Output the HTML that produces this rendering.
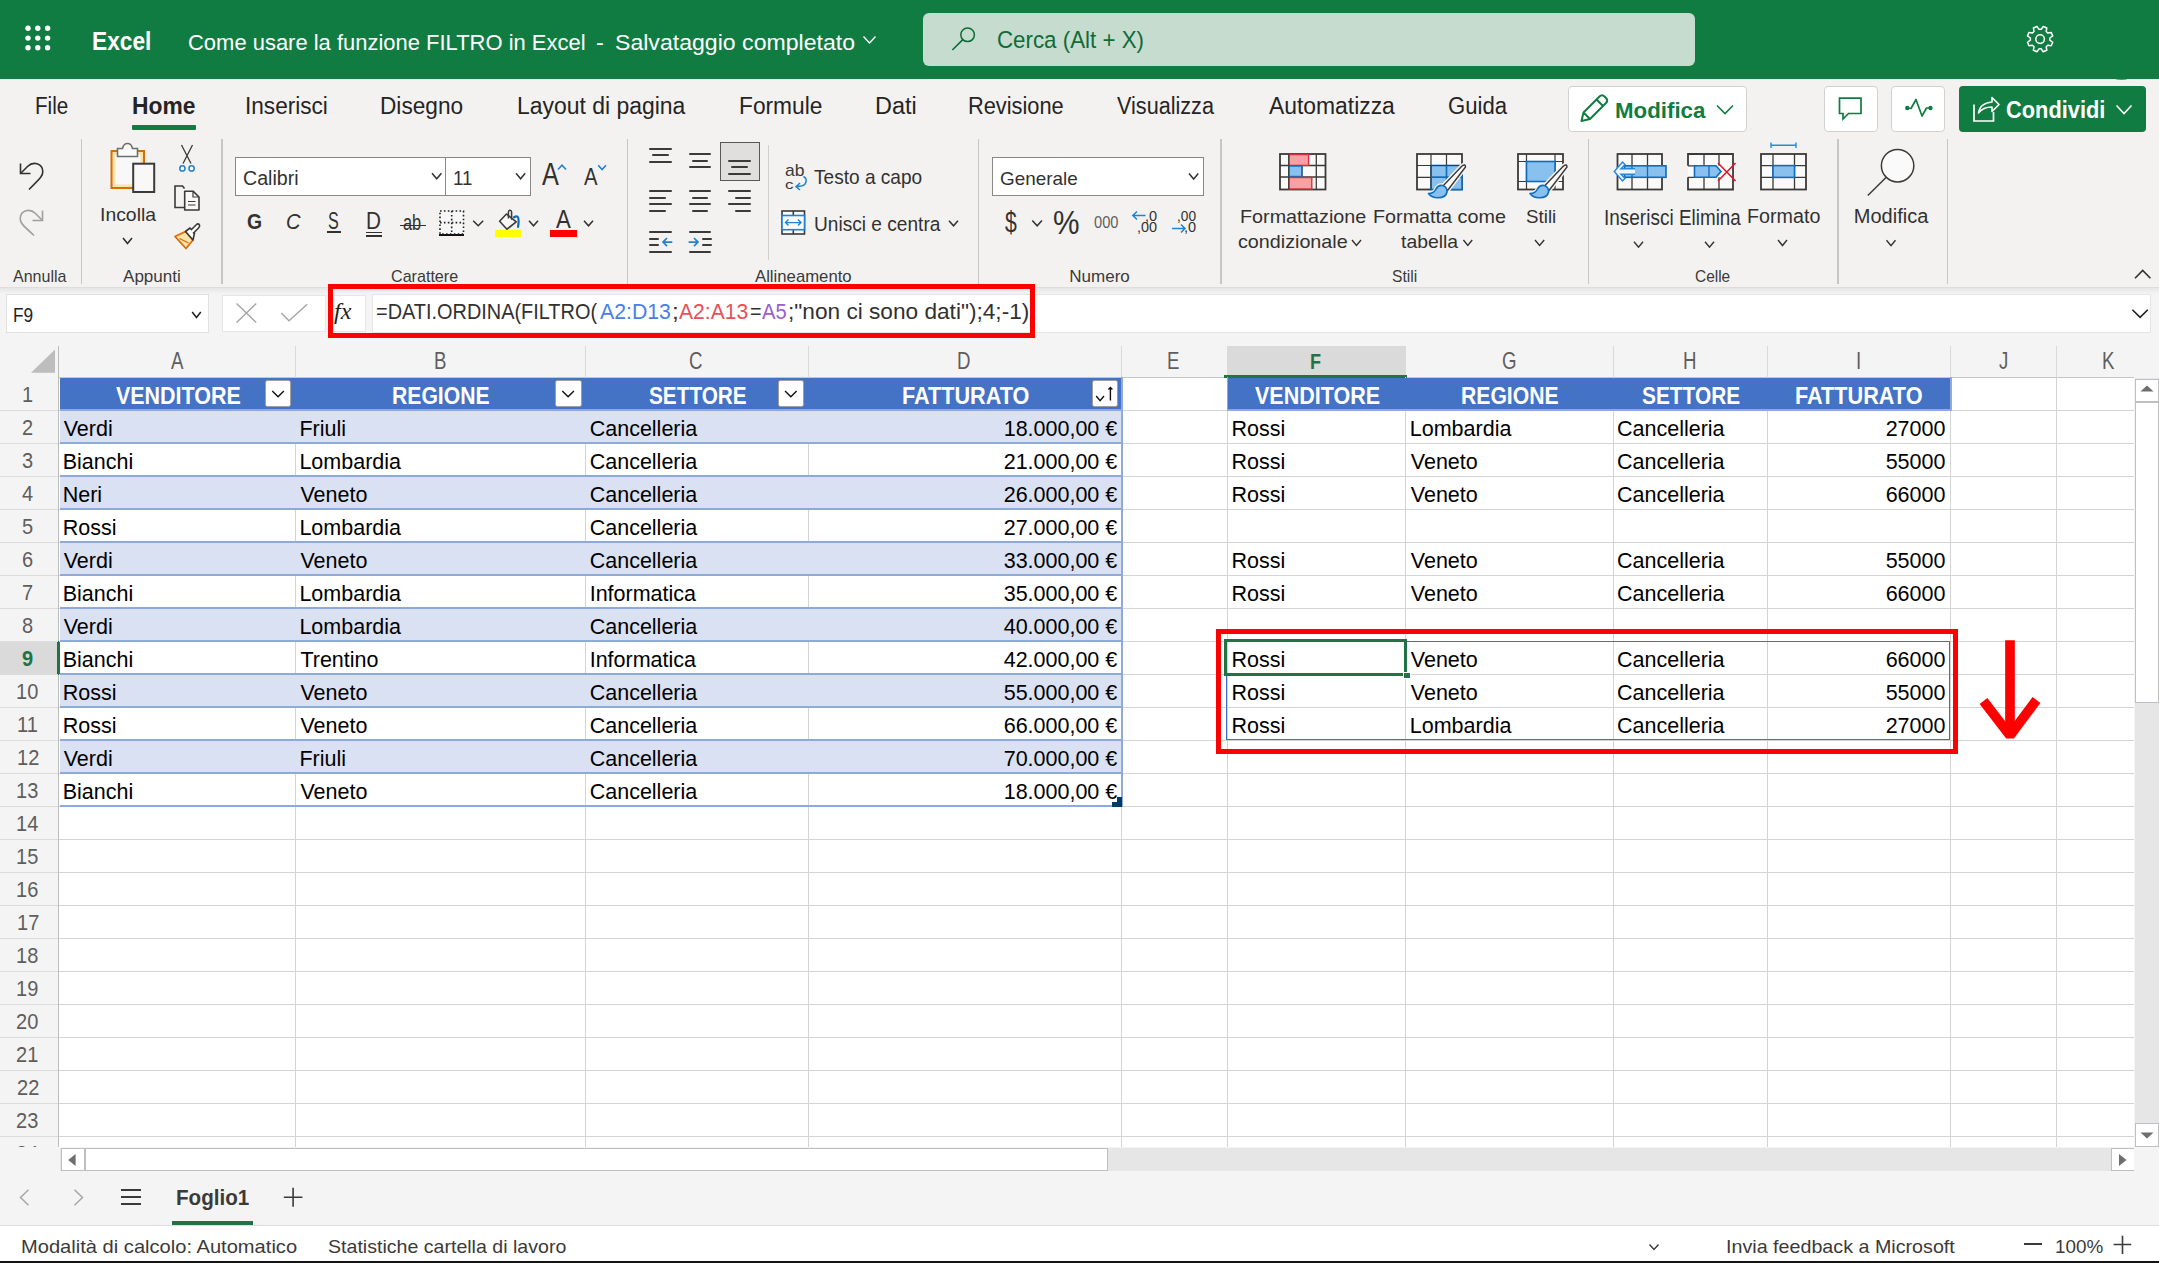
<!DOCTYPE html>
<html><head><meta charset="utf-8"><title>Excel</title>
<style>
html,body{margin:0;padding:0;width:2159px;height:1263px;overflow:hidden;background:#fff;font-family:'Liberation Sans',sans-serif;}
.r{position:absolute;}
.t{position:absolute;line-height:1;white-space:nowrap;transform-origin:0 0;}
svg{position:absolute;left:0;top:0;}
</style></head><body>
<div class="r" style="left:0px;top:0px;width:2159px;height:79px;background:#107C41;"></div>
<div class="r" style="left:923px;top:13px;width:772px;height:53px;background:#C5DCCE;border-radius:6px;"></div>
<div class="r" style="left:0px;top:79px;width:2159px;height:208px;background:#F3F2F1;"></div>
<div class="r" style="left:132px;top:125px;width:64px;height:5px;background:#107C41;border-radius:1px;"></div>
<div class="r" style="left:1567.5px;top:86px;width:179px;height:45.5px;background:#fff;border:1px solid #D1D1D1;border-radius:4px;box-sizing:border-box;"></div>
<div class="r" style="left:1823.5px;top:86px;width:54px;height:45.5px;background:#fff;border:1px solid #D1D1D1;border-radius:4px;box-sizing:border-box;"></div>
<div class="r" style="left:1891.3px;top:86px;width:54.2px;height:45.5px;background:#fff;border:1px solid #D1D1D1;border-radius:4px;box-sizing:border-box;"></div>
<div class="r" style="left:1959px;top:86px;width:187px;height:45.5px;background:#107C41;border-radius:4px;"></div>
<div class="r" style="left:80.5px;top:139px;width:1.5px;height:145px;background:#C8C6C4;"></div>
<div class="r" style="left:221.1px;top:139px;width:1.5px;height:145px;background:#C8C6C4;"></div>
<div class="r" style="left:626.6px;top:139px;width:1.5px;height:145px;background:#C8C6C4;"></div>
<div class="r" style="left:977.5px;top:139px;width:1.5px;height:145px;background:#C8C6C4;"></div>
<div class="r" style="left:1220.4px;top:139px;width:1.5px;height:145px;background:#C8C6C4;"></div>
<div class="r" style="left:1587.5px;top:139px;width:1.5px;height:145px;background:#C8C6C4;"></div>
<div class="r" style="left:1837.1px;top:139px;width:1.5px;height:145px;background:#C8C6C4;"></div>
<div class="r" style="left:1946.5px;top:139px;width:1.5px;height:145px;background:#C8C6C4;"></div>
<div class="r" style="left:767.5px;top:145px;width:1px;height:115px;background:#D2D0CE;"></div>
<div class="r" style="left:0px;top:287px;width:2159px;height:1px;background:#E4E3E2;"></div>
<div class="r" style="left:0px;top:288px;width:2159px;height:4px;background:linear-gradient(#E9E9E9,#F5F5F5);"></div>
<div class="r" style="left:235.2px;top:157.3px;width:210.5px;height:38.3px;background:#fff;border:1px solid #8A8886;box-sizing:border-box;"></div>
<div class="r" style="left:445px;top:157.3px;width:86px;height:38.3px;background:#fff;border:1px solid #8A8886;box-sizing:border-box;"></div>
<div class="r" style="left:327.4px;top:231px;width:13.2px;height:1.7px;background:#323130;"></div>
<div class="r" style="left:365.5px;top:231.8px;width:16px;height:1.6px;background:#323130;"></div>
<div class="r" style="left:365.5px;top:235.2px;width:16px;height:1.6px;background:#323130;"></div>
<div class="r" style="left:400px;top:224.8px;width:25.7px;height:1.5px;background:#323130;"></div>
<div class="r" style="left:439px;top:233.8px;width:25.2px;height:1.8px;background:#111;"></div>
<div class="r" style="left:495px;top:230.3px;width:26px;height:6.7px;background:#FFFF00;"></div>
<div class="r" style="left:549.9px;top:230.3px;width:27.1px;height:6.7px;background:#FF0000;"></div>
<div class="r" style="left:720.2px;top:142.1px;width:39.7px;height:38.6px;background:#E1DFDD;border:1.3px solid #5A5856;box-sizing:border-box;"></div>
<div class="r" style="left:648.5px;top:148px;width:23.799999999999955px;height:2px;background:#3B3A39;border-radius:1px;"></div>
<div class="r" style="left:652px;top:154px;width:17px;height:2px;background:#3B3A39;border-radius:1px;"></div>
<div class="r" style="left:648.5px;top:161px;width:23.799999999999955px;height:2px;background:#3B3A39;border-radius:1px;"></div>
<div class="r" style="left:688.6px;top:153px;width:22.899999999999977px;height:2px;background:#3B3A39;border-radius:1px;"></div>
<div class="r" style="left:692px;top:160px;width:16px;height:2px;background:#3B3A39;border-radius:1px;"></div>
<div class="r" style="left:688.6px;top:166px;width:22.899999999999977px;height:2px;background:#3B3A39;border-radius:1px;"></div>
<div class="r" style="left:727.6px;top:160px;width:23.799999999999955px;height:2px;background:#3B3A39;border-radius:1px;"></div>
<div class="r" style="left:731px;top:166px;width:17px;height:2px;background:#3B3A39;border-radius:1px;"></div>
<div class="r" style="left:727.6px;top:173px;width:23.799999999999955px;height:2px;background:#3B3A39;border-radius:1px;"></div>
<div class="r" style="left:648.5px;top:190px;width:23.799999999999955px;height:2px;background:#3B3A39;border-radius:1px;"></div>
<div class="r" style="left:688.6px;top:190px;width:22.899999999999977px;height:2px;background:#3B3A39;border-radius:1px;"></div>
<div class="r" style="left:727.6px;top:190px;width:23.799999999999955px;height:2px;background:#3B3A39;border-radius:1px;"></div>
<div class="r" style="left:648.5px;top:197px;width:17.100000000000023px;height:2px;background:#3B3A39;border-radius:1px;"></div>
<div class="r" style="left:692px;top:197px;width:16px;height:2px;background:#3B3A39;border-radius:1px;"></div>
<div class="r" style="left:734.5px;top:197px;width:16.899999999999977px;height:2px;background:#3B3A39;border-radius:1px;"></div>
<div class="r" style="left:648.5px;top:203px;width:23.799999999999955px;height:2px;background:#3B3A39;border-radius:1px;"></div>
<div class="r" style="left:688.6px;top:203px;width:22.899999999999977px;height:2px;background:#3B3A39;border-radius:1px;"></div>
<div class="r" style="left:727.6px;top:203px;width:23.799999999999955px;height:2px;background:#3B3A39;border-radius:1px;"></div>
<div class="r" style="left:648.5px;top:210px;width:17.100000000000023px;height:2px;background:#3B3A39;border-radius:1px;"></div>
<div class="r" style="left:692px;top:210px;width:16px;height:2px;background:#3B3A39;border-radius:1px;"></div>
<div class="r" style="left:734.5px;top:210px;width:16.899999999999977px;height:2px;background:#3B3A39;border-radius:1px;"></div>
<div class="r" style="left:648.5px;top:231px;width:23.799999999999955px;height:2px;background:#3B3A39;border-radius:1px;"></div>
<div class="r" style="left:648.5px;top:238px;width:10.200000000000045px;height:2px;background:#3B3A39;border-radius:1px;"></div>
<div class="r" style="left:648.5px;top:244px;width:10.200000000000045px;height:2px;background:#3B3A39;border-radius:1px;"></div>
<div class="r" style="left:648.5px;top:251px;width:23.799999999999955px;height:2px;background:#3B3A39;border-radius:1px;"></div>
<div class="r" style="left:688.6px;top:231px;width:22.899999999999977px;height:2px;background:#3B3A39;border-radius:1px;"></div>
<div class="r" style="left:702px;top:238px;width:9.5px;height:2px;background:#3B3A39;border-radius:1px;"></div>
<div class="r" style="left:702px;top:244px;width:9.5px;height:2px;background:#3B3A39;border-radius:1px;"></div>
<div class="r" style="left:688.6px;top:251px;width:22.899999999999977px;height:2px;background:#3B3A39;border-radius:1px;"></div>
<div class="r" style="left:992.2px;top:157.2px;width:211.5px;height:38.4px;background:#fff;border:1px solid #8A8886;box-sizing:border-box;"></div>
<div class="r" style="left:0px;top:292px;width:2159px;height:971px;background:#F4F4F4;"></div>
<div class="r" style="left:0px;top:287px;width:2159px;height:1px;background:#DEDDDC;"></div>
<div class="r" style="left:0px;top:288px;width:2159px;height:6px;background:linear-gradient(#E6E6E6,#F4F4F4);"></div>
<div class="r" style="left:6.4px;top:294px;width:203.1px;height:38.6px;background:#fff;border:1px solid #E1E1E1;box-sizing:border-box;"></div>
<div class="r" style="left:222.4px;top:295px;width:104px;height:36.7px;background:#fff;border:1px solid #E6E6E6;box-sizing:border-box;"></div>
<div class="r" style="left:333px;top:295px;width:33.3px;height:37px;background:#fff;border:1px solid #E6E6E6;box-sizing:border-box;"></div>
<div class="r" style="left:372.4px;top:294px;width:1779px;height:38.6px;background:#fff;border:1px solid #E6E6E6;box-sizing:border-box;"></div>
<div class="r" style="left:59px;top:377px;width:2075px;height:770px;background:#fff;"></div>
<div class="r" style="left:295px;top:346px;width:1px;height:31px;background:#DADADA;"></div>
<div class="r" style="left:585px;top:346px;width:1px;height:31px;background:#DADADA;"></div>
<div class="r" style="left:808px;top:346px;width:1px;height:31px;background:#DADADA;"></div>
<div class="r" style="left:1121px;top:346px;width:1px;height:31px;background:#DADADA;"></div>
<div class="r" style="left:1227px;top:346px;width:1px;height:31px;background:#DADADA;"></div>
<div class="r" style="left:1405px;top:346px;width:1px;height:31px;background:#DADADA;"></div>
<div class="r" style="left:1613px;top:346px;width:1px;height:31px;background:#DADADA;"></div>
<div class="r" style="left:1767px;top:346px;width:1px;height:31px;background:#DADADA;"></div>
<div class="r" style="left:1950px;top:346px;width:1px;height:31px;background:#DADADA;"></div>
<div class="r" style="left:2055.5px;top:346px;width:1px;height:31px;background:#DADADA;"></div>
<div class="r" style="left:0px;top:376.5px;width:2134px;height:1px;background:#C6C6C6;"></div>
<div class="r" style="left:1227px;top:346px;width:178px;height:31px;background:#DADADA;"></div>
<div class="r" style="left:1224px;top:374.5px;width:182.5px;height:3px;background:#217346;"></div>
<div class="r" style="left:0px;top:377px;width:58px;height:770px;background:#F4F4F4;"></div>
<div class="r" style="left:58px;top:346px;width:1.3px;height:801px;background:#BDBDBD;"></div>
<div class="r" style="left:0px;top:641px;width:57px;height:33px;background:#DADADA;"></div>
<div class="r" style="left:57px;top:641px;width:3px;height:34px;background:#217346;"></div>
<div class="r" style="left:0px;top:410px;width:58px;height:1px;background:#DCDCDC;"></div>
<div class="r" style="left:59px;top:410px;width:2075px;height:1px;background:#D4D4D4;"></div>
<div class="r" style="left:0px;top:443px;width:58px;height:1px;background:#DCDCDC;"></div>
<div class="r" style="left:59px;top:443px;width:2075px;height:1px;background:#D4D4D4;"></div>
<div class="r" style="left:0px;top:476px;width:58px;height:1px;background:#DCDCDC;"></div>
<div class="r" style="left:59px;top:476px;width:2075px;height:1px;background:#D4D4D4;"></div>
<div class="r" style="left:0px;top:509px;width:58px;height:1px;background:#DCDCDC;"></div>
<div class="r" style="left:59px;top:509px;width:2075px;height:1px;background:#D4D4D4;"></div>
<div class="r" style="left:0px;top:542px;width:58px;height:1px;background:#DCDCDC;"></div>
<div class="r" style="left:59px;top:542px;width:2075px;height:1px;background:#D4D4D4;"></div>
<div class="r" style="left:0px;top:575px;width:58px;height:1px;background:#DCDCDC;"></div>
<div class="r" style="left:59px;top:575px;width:2075px;height:1px;background:#D4D4D4;"></div>
<div class="r" style="left:0px;top:608px;width:58px;height:1px;background:#DCDCDC;"></div>
<div class="r" style="left:59px;top:608px;width:2075px;height:1px;background:#D4D4D4;"></div>
<div class="r" style="left:0px;top:641px;width:58px;height:1px;background:#DCDCDC;"></div>
<div class="r" style="left:59px;top:641px;width:2075px;height:1px;background:#D4D4D4;"></div>
<div class="r" style="left:0px;top:674px;width:58px;height:1px;background:#DCDCDC;"></div>
<div class="r" style="left:59px;top:674px;width:2075px;height:1px;background:#D4D4D4;"></div>
<div class="r" style="left:0px;top:707px;width:58px;height:1px;background:#DCDCDC;"></div>
<div class="r" style="left:59px;top:707px;width:2075px;height:1px;background:#D4D4D4;"></div>
<div class="r" style="left:0px;top:740px;width:58px;height:1px;background:#DCDCDC;"></div>
<div class="r" style="left:59px;top:740px;width:2075px;height:1px;background:#D4D4D4;"></div>
<div class="r" style="left:0px;top:773px;width:58px;height:1px;background:#DCDCDC;"></div>
<div class="r" style="left:59px;top:773px;width:2075px;height:1px;background:#D4D4D4;"></div>
<div class="r" style="left:0px;top:806px;width:58px;height:1px;background:#DCDCDC;"></div>
<div class="r" style="left:59px;top:806px;width:2075px;height:1px;background:#D4D4D4;"></div>
<div class="r" style="left:0px;top:839px;width:58px;height:1px;background:#DCDCDC;"></div>
<div class="r" style="left:59px;top:839px;width:2075px;height:1px;background:#D4D4D4;"></div>
<div class="r" style="left:0px;top:872px;width:58px;height:1px;background:#DCDCDC;"></div>
<div class="r" style="left:59px;top:872px;width:2075px;height:1px;background:#D4D4D4;"></div>
<div class="r" style="left:0px;top:905px;width:58px;height:1px;background:#DCDCDC;"></div>
<div class="r" style="left:59px;top:905px;width:2075px;height:1px;background:#D4D4D4;"></div>
<div class="r" style="left:0px;top:938px;width:58px;height:1px;background:#DCDCDC;"></div>
<div class="r" style="left:59px;top:938px;width:2075px;height:1px;background:#D4D4D4;"></div>
<div class="r" style="left:0px;top:971px;width:58px;height:1px;background:#DCDCDC;"></div>
<div class="r" style="left:59px;top:971px;width:2075px;height:1px;background:#D4D4D4;"></div>
<div class="r" style="left:0px;top:1004px;width:58px;height:1px;background:#DCDCDC;"></div>
<div class="r" style="left:59px;top:1004px;width:2075px;height:1px;background:#D4D4D4;"></div>
<div class="r" style="left:0px;top:1037px;width:58px;height:1px;background:#DCDCDC;"></div>
<div class="r" style="left:59px;top:1037px;width:2075px;height:1px;background:#D4D4D4;"></div>
<div class="r" style="left:0px;top:1070px;width:58px;height:1px;background:#DCDCDC;"></div>
<div class="r" style="left:59px;top:1070px;width:2075px;height:1px;background:#D4D4D4;"></div>
<div class="r" style="left:0px;top:1103px;width:58px;height:1px;background:#DCDCDC;"></div>
<div class="r" style="left:59px;top:1103px;width:2075px;height:1px;background:#D4D4D4;"></div>
<div class="r" style="left:0px;top:1136px;width:58px;height:1px;background:#DCDCDC;"></div>
<div class="r" style="left:59px;top:1136px;width:2075px;height:1px;background:#D4D4D4;"></div>
<div class="r" style="left:295px;top:377px;width:1px;height:770px;background:#D4D4D4;"></div>
<div class="r" style="left:585px;top:377px;width:1px;height:770px;background:#D4D4D4;"></div>
<div class="r" style="left:808px;top:377px;width:1px;height:770px;background:#D4D4D4;"></div>
<div class="r" style="left:1121px;top:377px;width:1px;height:770px;background:#D4D4D4;"></div>
<div class="r" style="left:1227px;top:377px;width:1px;height:770px;background:#D4D4D4;"></div>
<div class="r" style="left:1405px;top:377px;width:1px;height:770px;background:#D4D4D4;"></div>
<div class="r" style="left:1613px;top:377px;width:1px;height:770px;background:#D4D4D4;"></div>
<div class="r" style="left:1767px;top:377px;width:1px;height:770px;background:#D4D4D4;"></div>
<div class="r" style="left:1950px;top:377px;width:1px;height:770px;background:#D4D4D4;"></div>
<div class="r" style="left:2055.5px;top:377px;width:1px;height:770px;background:#D4D4D4;"></div>
<div class="r" style="left:60px;top:378px;width:1061px;height:31px;background:#4472C4;"></div>
<div class="r" style="left:60px;top:410px;width:1061px;height:33px;background:#D9E1F2;"></div>
<div class="r" style="left:60px;top:476px;width:1061px;height:33px;background:#D9E1F2;"></div>
<div class="r" style="left:60px;top:542px;width:1061px;height:33px;background:#D9E1F2;"></div>
<div class="r" style="left:60px;top:608px;width:1061px;height:33px;background:#D9E1F2;"></div>
<div class="r" style="left:60px;top:674px;width:1061px;height:33px;background:#D9E1F2;"></div>
<div class="r" style="left:60px;top:740px;width:1061px;height:33px;background:#D9E1F2;"></div>
<div class="r" style="left:60px;top:409px;width:1063px;height:2px;background:#8EA9DB;"></div>
<div class="r" style="left:60px;top:442px;width:1063px;height:2px;background:#8EA9DB;"></div>
<div class="r" style="left:60px;top:475px;width:1063px;height:2px;background:#8EA9DB;"></div>
<div class="r" style="left:60px;top:508px;width:1063px;height:2px;background:#8EA9DB;"></div>
<div class="r" style="left:60px;top:541px;width:1063px;height:2px;background:#8EA9DB;"></div>
<div class="r" style="left:60px;top:574px;width:1063px;height:2px;background:#8EA9DB;"></div>
<div class="r" style="left:60px;top:607px;width:1063px;height:2px;background:#8EA9DB;"></div>
<div class="r" style="left:60px;top:640px;width:1063px;height:2px;background:#8EA9DB;"></div>
<div class="r" style="left:60px;top:673px;width:1063px;height:2px;background:#8EA9DB;"></div>
<div class="r" style="left:60px;top:706px;width:1063px;height:2px;background:#8EA9DB;"></div>
<div class="r" style="left:60px;top:739px;width:1063px;height:2px;background:#8EA9DB;"></div>
<div class="r" style="left:60px;top:772px;width:1063px;height:2px;background:#8EA9DB;"></div>
<div class="r" style="left:60px;top:805px;width:1063px;height:2px;background:#8EA9DB;"></div>
<div class="r" style="left:1121px;top:377px;width:2px;height:430px;background:#8EA9DB;"></div>
<div class="r" style="left:1117px;top:797px;width:5px;height:10px;background:#003A66;"></div>
<div class="r" style="left:1112px;top:802px;width:10px;height:5px;background:#003A66;"></div>
<div class="r" style="left:265px;top:380.3px;width:26.100000000000023px;height:27.2px;background:#fff;border:1px solid #A19F9D;border-radius:2.5px;box-sizing:border-box;"></div>
<div class="r" style="left:554.6px;top:380.3px;width:27.0px;height:27.2px;background:#fff;border:1px solid #A19F9D;border-radius:2.5px;box-sizing:border-box;"></div>
<div class="r" style="left:777.5px;top:380.3px;width:26.700000000000045px;height:27.2px;background:#fff;border:1px solid #A19F9D;border-radius:2.5px;box-sizing:border-box;"></div>
<div class="r" style="left:1091.7px;top:380.3px;width:26.700000000000045px;height:27.2px;background:#fff;border:1px solid #A19F9D;border-radius:2.5px;box-sizing:border-box;"></div>
<div class="r" style="left:1227px;top:378px;width:723px;height:31px;background:#4472C4;"></div>
<div class="r" style="left:1227px;top:409px;width:724.5px;height:2px;background:#8EA9DB;"></div>
<div class="r" style="left:1949.5px;top:377px;width:2px;height:34px;background:#8EA9DB;"></div>
<div class="r" style="left:1226.5px;top:377px;width:1px;height:33px;background:#8EA9DB;"></div>
<svg width="2159" height="1263" viewBox="0 0 2159 1263">
<circle cx="28" cy="28.3" r="2.7" fill="#fff"/>
<circle cx="37.8" cy="28.3" r="2.7" fill="#fff"/>
<circle cx="47.6" cy="28.3" r="2.7" fill="#fff"/>
<circle cx="28" cy="38.1" r="2.7" fill="#fff"/>
<circle cx="37.8" cy="38.1" r="2.7" fill="#fff"/>
<circle cx="47.6" cy="38.1" r="2.7" fill="#fff"/>
<circle cx="28" cy="47.8" r="2.7" fill="#fff"/>
<circle cx="37.8" cy="47.8" r="2.7" fill="#fff"/>
<circle cx="47.6" cy="47.8" r="2.7" fill="#fff"/>
<polyline points="863.5,36.5 869.5,43 875.5,36.5" fill="none" stroke="#fff" stroke-width="1.4"/>
<circle cx="967.6" cy="34.8" r="6.8" fill="none" stroke="#0F6B38" stroke-width="1.5"/>
<line x1="952.8" y1="49.5" x2="962.8" y2="39.6" stroke="#0F6B38" stroke-width="1.6" stroke-linecap="round"/>
<polygon points="2041.21,29.36 2043.24,26.49 2046.80,27.96 2046.20,31.43 2047.77,33.00 2051.24,32.40 2052.71,35.96 2049.84,37.99 2049.84,40.21 2052.71,42.24 2051.24,45.80 2047.77,45.20 2046.20,46.77 2046.80,50.24 2043.24,51.71 2041.21,48.84 2038.99,48.84 2036.96,51.71 2033.40,50.24 2034.00,46.77 2032.43,45.20 2028.96,45.80 2027.49,42.24 2030.36,40.21 2030.36,37.99 2027.49,35.96 2028.96,32.40 2032.43,33.00 2034.00,31.43 2033.40,27.96 2036.96,26.49 2038.99,29.36" fill="none" stroke="#fff" stroke-width="1.5" stroke-linejoin="round"/>
<circle cx="2040.1" cy="39.1" r="4.3" fill="none" stroke="#fff" stroke-width="1.5"/>
<path d="M2113 78.6 Q2121.5 81 2130 78.6 Z" fill="#107C41"/>
<path d="M1581.5 121 L1583.5 112.5 L1599.5 96.5 Q1602 94 1604.5 96.5 L1606 98 Q1608.5 100.5 1606 103 L1590 119 Z M1596.5 99.5 L1603 106 M1583.5 112.5 L1590 119" fill="none" stroke="#107C41" stroke-width="2" stroke-linejoin="round"/>
<polyline points="1717,105.5 1725,113.5 1733,105.5" fill="none" stroke="#107C41" stroke-width="1.6"/>
<path d="M1839.5 98.2 H1861 V113.5 H1848.5 L1843 119 V113.5 H1839.5 Z" fill="none" stroke="#107C41" stroke-width="1.7" stroke-linejoin="miter"/>
<polyline points="1907,108 1911,108.5 1916,99.5 1922,116 1926.5,108 1930.5,108" fill="none" stroke="#107C41" stroke-width="1.7" stroke-linejoin="round"/>
<circle cx="1907.3" cy="108" r="2.2" fill="#107C41"/><circle cx="1930.5" cy="108" r="2.2" fill="#107C41"/>
<path d="M1974 104.5 V121 H1993.5 V112" fill="none" stroke="#fff" stroke-width="1.7"/>
<path d="M1978.5 113 Q1980 103 1992 102 V97.5 L1999 104.5 L1992 111.5 V107 Q1983 107 1978.5 113 Z" fill="none" stroke="#fff" stroke-width="1.6" stroke-linejoin="round"/>
<polyline points="2116.5,105.5 2124,113.5 2131.5,105.5" fill="none" stroke="#fff" stroke-width="1.6"/>
<path d="M20.5 163.5 V173.5 H30.5" fill="none" stroke="#323130" stroke-width="1.6"/>
<path d="M20.8 173.2 L27.5 166.5 C33 161 42.5 163 42.8 171.5 C43 175.5 41 177.5 29 189.5" fill="none" stroke="#323130" stroke-width="1.6"/>
<path d="M42.5 210.5 V220.5 H32.5" fill="none" stroke="#A19F9D" stroke-width="1.6"/>
<path d="M42.2 220.2 L35.5 213.5 C30 208 20.5 210 20.2 218.5 C20 222.5 22 224.5 34 235.5" fill="none" stroke="#A19F9D" stroke-width="1.6"/>
<rect x="111.5" y="151" width="32.5" height="37" fill="#FBE3A6" stroke="#D86B0C" stroke-width="2"/>
<rect x="115" y="154.5" width="25.5" height="30" fill="#F8F8F8"/>
<path d="M117.5 156.5 V148.5 H122.5 Q123.5 143.5 127.5 143.5 Q131.5 143.5 132.5 148.5 H137.5 V156.5 Z" fill="#FAFAFA" stroke="#6E6E6E" stroke-width="1.6"/>
<rect x="133.2" y="163.7" width="21" height="28.3" fill="#F8F8F8" stroke="#3B3A39" stroke-width="2"/>
<polyline points="123,238 127.5,243.5 132,238" fill="none" stroke="#323130" stroke-width="1.6"/>
<path d="M181.5 145 L191 163.5 M192.5 145 L183 163.5" stroke="#3B3A39" stroke-width="1.3" fill="none"/>
<circle cx="182.4" cy="168.4" r="2.6" fill="#fff" stroke="#1F83D2" stroke-width="1.5"/><circle cx="191.6" cy="168.4" r="2.6" fill="#fff" stroke="#1F83D2" stroke-width="1.5"/>
<path d="M185 207.5 H175 V186 H182.5 L184.5 188.5" fill="none" stroke="#3B3A39" stroke-width="1.6"/>
<path d="M184.7 191.2 H193 L199 197 V210 H184.7 Z" fill="#F8F8F8" stroke="#3B3A39" stroke-width="1.6" stroke-linejoin="round"/>
<path d="M193 191.2 V197 H199 M188 201.5 H195.5 M188 205 H195.5" fill="none" stroke="#3B3A39" stroke-width="1.2"/>
<path d="M175 236.5 L185.5 231.5 L193 240 L186 248.5 Z" fill="#FBE3A6" stroke="#D86B0C" stroke-width="1.8" stroke-linejoin="round"/>
<path d="M179.5 238.5 L188.5 243" stroke="#D86B0C" stroke-width="1.3"/>
<path d="M185.5 231.5 L190 228 L194.5 233 L193 240 Z" fill="#fff" stroke="#3B3A39" stroke-width="1.6" stroke-linejoin="round"/>
<path d="M191 230 L196.5 224.5 Q198.5 223 199.5 225 Q200 226.5 198.5 228 L193 233.5" fill="#fff" stroke="#3B3A39" stroke-width="1.6"/>
<polyline points="432,173.3 436.7,178.8 441.4,173.3" fill="none" stroke="#323130" stroke-width="1.5"/>
<polyline points="516,173.3 520.6,178.8 525.2,173.3" fill="none" stroke="#323130" stroke-width="1.5"/>
<polyline points="558,169.5 562.0,165.2 566,169.5" fill="none" stroke="#1F83D2" stroke-width="1.6"/>
<polyline points="598.2,165.2 602.1,169.5 606,165.2" fill="none" stroke="#1F83D2" stroke-width="1.6"/>
<rect x="440" y="211" width="23.5" height="23" fill="#F8F8F8" stroke="#222" stroke-width="1.6" stroke-dasharray="1.6 2.3"/>
<path d="M451.7 211 V234 M440 222.6 H463.5" stroke="#222" stroke-width="1.6" stroke-dasharray="1.6 2.3"/>
<polyline points="473.2,220.8 478.2,225.8 483.2,220.8" fill="none" stroke="#323130" stroke-width="1.5"/>
<path d="M499.6 221.2 L506.5 214 L516.2 221.8 L507 229.2 Z" fill="#F8F8F8" stroke="#3B3A39" stroke-width="1.6" stroke-linejoin="round"/>
<path d="M508.4 218.5 V212 Q508.4 210.2 510 210.2 Q511.6 210.2 511.6 212 V219.8" fill="none" stroke="#3B3A39" stroke-width="1.5"/>
<path d="M514 217.3 Q518.6 214.5 518.6 220.5 Q518.6 224 518 226.8" fill="none" stroke="#0F6CBD" stroke-width="2.2" stroke-linecap="round"/>
<polyline points="529,220.8 533.5,225.8 538,220.8" fill="none" stroke="#323130" stroke-width="1.5"/>
<polyline points="584,220.8 588.5,225.8 593,220.8" fill="none" stroke="#323130" stroke-width="1.5"/>
<path d="M663 242.1 H672.3 M667 238 L663 242.1 L667 246.2" fill="none" stroke="#1F83D2" stroke-width="1.7"/>
<path d="M688.6 242.1 H698 M694 238 L698 242.1 L694 246.2" fill="none" stroke="#1F83D2" stroke-width="1.7"/>
<path d="M803.5 176.5 Q808 179 805 184 Q803 186.5 796.5 186.5 M800 183 L796 186.7 L800 190" fill="none" stroke="#1F83D2" stroke-width="1.5"/>
<rect x="782" y="211" width="22.5" height="23" fill="#FAFAFA" stroke="#3B3A39" stroke-width="1.6"/>
<path d="M793.3 211 V215.5 M793.3 229.7 V234" stroke="#3B3A39" stroke-width="1.6"/>
<rect x="782" y="215.5" width="22.5" height="14.2" fill="#FAFAFA" stroke="#1F83D2" stroke-width="1.6"/>
<path d="M785.5 222.6 H801 M788.5 219.6 L785.5 222.6 L788.5 225.6 M798 219.6 L801 222.6 L798 225.6" fill="none" stroke="#1F83D2" stroke-width="1.4"/>
<polyline points="949,220.8 953.5,225.8 958,220.8" fill="none" stroke="#323130" stroke-width="1.5"/>
<polyline points="1189,173.6 1193.65,179 1198.3,173.6" fill="none" stroke="#323130" stroke-width="1.5"/>
<polyline points="1032.3,220.5 1037.15,225.8 1042,220.5" fill="none" stroke="#323130" stroke-width="1.5"/>
<path d="M1132.5 215.5 H1145.5 M1137 211.5 L1132.8 215.5 L1137 219.5" fill="none" stroke="#1F83D2" stroke-width="1.5"/>
<path d="M1172 228.5 H1185 M1181 224.5 L1185 228.5 L1181 232.5" fill="none" stroke="#1F83D2" stroke-width="1.5"/>
<rect x="1280" y="154" width="45.5" height="35.5" fill="#FAFAFA" stroke="#3B3A39" stroke-width="1.8"/>
<path d="M1280 165.5 H1325.5 M1280 177 H1325.5 M1316.3 154 V189.5 M1302 165.5 V177" stroke="#3B3A39" stroke-width="1.3" fill="none"/>
<rect x="1288.8" y="154.6" width="19.8" height="10.8" fill="#F7A1A4" stroke="#D13438" stroke-width="1.4"/>
<rect x="1288.8" y="166" width="13" height="10.5" fill="#8AC0EE" stroke="#0F6CBD" stroke-width="1.4"/>
<rect x="1288.8" y="177.5" width="23" height="11.5" fill="#F7A1A4" stroke="#D13438" stroke-width="1.4"/>
<path d="M1288.8 154 V189.5" stroke="#3B3A39" stroke-width="1.3"/>
<rect x="1417" y="154" width="45" height="35.5" fill="#FAFAFA" stroke="#3B3A39" stroke-width="1.8"/>
<rect x="1431" y="165.5" width="31" height="24" fill="#8AC0EE" stroke="#0F6CBD" stroke-width="1.6"/>
<path d="M1417 165.5 H1431 M1417 177.3 H1462 M1431 154 V189.5 M1446.5 154 V189.5 M1431 165.5 H1462" stroke="#3B3A39" stroke-width="1.2" fill="none"/>
<path d="M1431 177.3 H1462 M1446.5 165.5 V189.5" stroke="#0F6CBD" stroke-width="1.4" fill="none"/>
<path d="M1442.50 186.50 L1462.00 166.00 Q1465.50 163.50 1465.50 167.00 L1447.50 190.50 Z" fill="#fff" stroke="#F3F2F1" stroke-width="4.5" stroke-linejoin="round"/>
<path d="M1428.50 193.50 Q1434.00 193.50 1436.00 189.00 Q1438.50 184.50 1442.50 185.50 Q1447.50 187.00 1447.00 192.00 Q1446.00 197.80 1438.00 197.80 Q1431.50 197.80 1428.50 193.50 Z" fill="#fff" stroke="#F3F2F1" stroke-width="4" stroke-linejoin="round"/>
<path d="M1442.50 186.50 L1462.00 166.00 Q1465.50 163.50 1465.50 167.00 L1447.50 190.50 Z" fill="#FAFAFA" stroke="#3B3A39" stroke-width="1.4" stroke-linejoin="round"/>
<path d="M1428.50 193.50 Q1434.00 193.50 1436.00 189.00 Q1438.50 184.50 1442.50 185.50 Q1447.50 187.00 1447.00 192.00 Q1446.00 197.80 1438.00 197.80 Q1431.50 197.80 1428.50 193.50 Z" fill="#8AC0EE" stroke="#0F6CBD" stroke-width="1.6" stroke-linejoin="round"/>
<rect x="1518" y="154" width="45" height="35.5" fill="#FAFAFA" stroke="#3B3A39" stroke-width="1.8"/>
<path d="M1518 161.5 H1563 M1518 181.5 H1563 M1526.5 154 V189.5 M1555 154 V189.5" stroke="#3B3A39" stroke-width="1.2" fill="none"/>
<rect x="1526.5" y="161.5" width="28.5" height="20" fill="#8AC0EE" stroke="#0F6CBD" stroke-width="1.6"/>
<path d="M1544.00 186.50 L1563.50 166.00 Q1567.00 163.50 1567.00 167.00 L1549.00 190.50 Z" fill="#fff" stroke="#F3F2F1" stroke-width="4.5" stroke-linejoin="round"/>
<path d="M1530.00 193.50 Q1535.50 193.50 1537.50 189.00 Q1540.00 184.50 1544.00 185.50 Q1549.00 187.00 1548.50 192.00 Q1547.50 197.80 1539.50 197.80 Q1533.00 197.80 1530.00 193.50 Z" fill="#fff" stroke="#F3F2F1" stroke-width="4" stroke-linejoin="round"/>
<path d="M1544.00 186.50 L1563.50 166.00 Q1567.00 163.50 1567.00 167.00 L1549.00 190.50 Z" fill="#FAFAFA" stroke="#3B3A39" stroke-width="1.4" stroke-linejoin="round"/>
<path d="M1530.00 193.50 Q1535.50 193.50 1537.50 189.00 Q1540.00 184.50 1544.00 185.50 Q1549.00 187.00 1548.50 192.00 Q1547.50 197.80 1539.50 197.80 Q1533.00 197.80 1530.00 193.50 Z" fill="#8AC0EE" stroke="#0F6CBD" stroke-width="1.6" stroke-linejoin="round"/>
<polyline points="1352,240 1356.5,245.5 1361,240" fill="none" stroke="#323130" stroke-width="1.4"/>
<polyline points="1463.4,240 1467.8000000000002,245.5 1472.2,240" fill="none" stroke="#323130" stroke-width="1.4"/>
<polyline points="1535,240 1539.6,245.5 1544.2,240" fill="none" stroke="#323130" stroke-width="1.4"/>
<rect x="1617.5" y="154" width="44.5" height="35.5" fill="#FAFAFA" stroke="#3B3A39" stroke-width="1.8"/>
<path d="M1632 154 V189.5 M1647.5 154 V189.5" stroke="#3B3A39" stroke-width="1.3"/>
<rect x="1624.5" y="165.8" width="41.5" height="11.5" fill="#8AC0EE" stroke="#0F6CBD" stroke-width="1.6"/>
<path d="M1632 165.8 V177.3 M1647.5 165.8 V177.3" stroke="#0F6CBD" stroke-width="1.3"/>
<path d="M1635 168.8 H1621 L1625 164.5 L1622.5 162 L1614.3 171.5 L1622.5 181 L1625 178.5 L1621 174.2 H1635" fill="#F0F6FC" stroke="#2B88D8" stroke-width="1.5" stroke-linejoin="miter"/>
<path d="M1688 165.8 V154 H1733 V189.5 H1688 V177.3" fill="#FAFAFA" stroke="#3B3A39" stroke-width="1.8"/>
<path d="M1704 154 V165.8 M1719 154 V165.8 M1704 177.3 V189.5 M1719 177.3 V189.5 M1688 165.8 H1695 M1688 177.3 H1695" stroke="#3B3A39" stroke-width="1.3"/>
<path d="M1694.5 165.8 H1716 L1721 171.5 L1716 177.3 H1694.5 Z" fill="#8AC0EE" stroke="#0F6CBD" stroke-width="1.6"/>
<path d="M1709 165.8 V177.3" stroke="#0F6CBD" stroke-width="1.3"/>
<path d="M1718 163 L1735.5 181 M1735.5 163 L1718 181" stroke="#E81123" stroke-width="1.5"/>
<rect x="1761" y="154" width="45" height="35.5" fill="#FAFAFA" stroke="#3B3A39" stroke-width="1.8"/>
<path d="M1761 165.6 H1806 M1761 177.4 H1806 M1773 154 V189.5 M1794.5 154 V189.5" stroke="#3B3A39" stroke-width="1.3"/>
<rect x="1773" y="165.6" width="21.5" height="11.8" fill="#8AC0EE" stroke="#0F6CBD" stroke-width="1.6"/>
<path d="M1771 145.3 H1796 M1771 142.5 V148 M1796 142.5 V148" stroke="#2B88D8" stroke-width="1.4"/>
<polyline points="1634.0,241.75 1638.5,247.25 1643.0,241.75" fill="none" stroke="#323130" stroke-width="1.4"/>
<polyline points="1705.0,241.75 1709.5,247.25 1714.0,241.75" fill="none" stroke="#323130" stroke-width="1.4"/>
<polyline points="1778.0,240.05 1782.5,245.55 1787.0,240.05" fill="none" stroke="#323130" stroke-width="1.4"/>
<circle cx="1897.6" cy="165.7" r="16.2" fill="#FAFAFA" stroke="#3B3A39" stroke-width="1.5"/>
<path d="M1867.8 195.5 L1886 177.5" stroke="#3B3A39" stroke-width="1.5"/>
<polyline points="1886.5,240.25 1891.0,245.75 1895.5,240.25" fill="none" stroke="#323130" stroke-width="1.4"/>
<polyline points="2135,278.3 2142.7,270.5 2150.4,278.3" fill="none" stroke="#323130" stroke-width="1.6"/>
<polyline points="192.2,312 196.5,317.5 200.8,312" fill="none" stroke="#201F1E" stroke-width="1.5"/>
<path d="M236.6 303.6 L256.2 322.4 M256.2 303.6 L236.6 322.4" stroke="#A6A6A6" stroke-width="1.4"/>
<path d="M281.3 313 L289 320.8 L307.2 304.2" fill="none" stroke="#A6A6A6" stroke-width="1.4"/>
<polyline points="2132.4,309.8 2140.1000000000004,317.4 2147.8,309.8" fill="none" stroke="#201F1E" stroke-width="1.6"/>
<polygon points="55,349.5 55,372.7 31,372.7" fill="#BDBDBD"/>
<polyline points="272.25,391 278.05,396.8 283.85,391" fill="none" stroke="#111" stroke-width="1.4"/>
<polyline points="562.3000000000001,391 568.1,396.8 573.9,391" fill="none" stroke="#111" stroke-width="1.4"/>
<polyline points="785.0500000000001,391 790.85,396.8 796.65,391" fill="none" stroke="#111" stroke-width="1.4"/>
<polyline points="1096.2,396 1100.1,400.7 1104.0,396" fill="none" stroke="#111" stroke-width="1.4"/>
<path d="M1110.4 387.6 V400.5 M1108.4 389.6 L1110.4 387.6 L1112.4 389.6" fill="none" stroke="#111" stroke-width="1.4"/>
</svg>
<div class="t" style="left:91.73px;top:28.00px;font-size:26.25px;color:#fff;font-weight:bold;transform:scaleX(0.8657);">Excel</div>
<div class="t" style="left:188.07px;top:30.64px;font-size:23.50px;color:#fff;transform:scale(0.9347,0.9634);transform-origin:0 18.96px;">Come usare la funzione FILTRO in Excel</div>
<div class="t" style="left:596.00px;top:30.64px;font-size:23.50px;color:#fff;transform:scale(1.0000,0.9634);transform-origin:0 18.96px;">-</div>
<div class="t" style="left:614.82px;top:30.64px;font-size:23.50px;color:#fff;transform:scale(0.9826,0.9634);transform-origin:0 18.96px;">Salvataggio completato</div>
<div class="t" style="left:996.82px;top:28.80px;font-size:22.75px;color:#0F6B38;transform:scale(0.9809,1.0400);transform-origin:0 19.00px;">Cerca (Alt + X)</div>
<div class="t" style="left:35.15px;top:94.40px;font-size:24.25px;color:#252423;transform:scaleX(0.8513);">File</div>
<div class="t" style="left:132.06px;top:94.40px;font-size:24.25px;color:#252423;font-weight:bold;transform:scaleX(0.9410);">Home</div>
<div class="t" style="left:245.44px;top:94.40px;font-size:24.25px;color:#252423;transform:scaleX(0.9316);">Inserisci</div>
<div class="t" style="left:380.07px;top:94.40px;font-size:24.25px;color:#252423;transform:scaleX(0.9339);">Disegno</div>
<div class="t" style="left:516.65px;top:94.40px;font-size:24.25px;color:#252423;transform:scaleX(0.9460);">Layout di pagina</div>
<div class="t" style="left:739.46px;top:94.40px;font-size:24.25px;color:#252423;transform:scaleX(0.9377);">Formule</div>
<div class="t" style="left:874.63px;top:94.40px;font-size:24.25px;color:#252423;transform:scaleX(0.9672);">Dati</div>
<div class="t" style="left:968.10px;top:94.40px;font-size:24.25px;color:#252423;transform:scaleX(0.8991);">Revisione</div>
<div class="t" style="left:1117.00px;top:94.40px;font-size:24.25px;color:#252423;transform:scaleX(0.8916);">Visualizza</div>
<div class="t" style="left:1269.00px;top:94.40px;font-size:24.25px;color:#252423;transform:scaleX(0.9429);">Automatizza</div>
<div class="t" style="left:1447.89px;top:94.40px;font-size:24.25px;color:#252423;transform:scaleX(0.9124);">Guida</div>
<div class="t" style="left:1614.73px;top:98.70px;font-size:23.00px;color:#107C41;font-weight:bold;transform:scale(0.9688,0.9471);transform-origin:0 19.00px;">Modifica</div>
<div class="t" style="left:2006.40px;top:99.60px;font-size:22.50px;color:#fff;font-weight:bold;transform:scale(0.9690,1.0267);transform-origin:0 18.00px;">Condividi</div>
<div class="t" style="left:12.90px;top:267.79px;font-size:17.00px;color:#3B3A39;transform:scaleX(0.9431);">Annulla</div>
<div class="t" style="left:122.70px;top:267.79px;font-size:17.00px;color:#3B3A39;transform:scaleX(1.0039);">Appunti</div>
<div class="t" style="left:391.30px;top:267.79px;font-size:17.00px;color:#3B3A39;transform:scaleX(0.9473);">Carattere</div>
<div class="t" style="left:755.00px;top:267.79px;font-size:17.00px;color:#3B3A39;transform:scaleX(0.9834);">Allineamento</div>
<div class="t" style="left:1069.30px;top:267.79px;font-size:17.00px;color:#3B3A39;">Numero</div>
<div class="t" style="left:1392.00px;top:267.79px;font-size:17.00px;color:#3B3A39;transform:scaleX(0.9205);">Stili</div>
<div class="t" style="left:1695.40px;top:267.79px;font-size:17.00px;color:#3B3A39;transform:scaleX(0.9090);">Celle</div>
<div class="t" style="left:99.91px;top:204.91px;font-size:19.50px;color:#323130;transform:scale(0.9942,0.9657);transform-origin:0 15.99px;">Incolla</div>
<div class="t" style="left:242.56px;top:167.81px;font-size:20.75px;color:#323130;transform:scaleX(0.9441);">Calibri</div>
<div class="t" style="left:452.90px;top:167.81px;font-size:20.75px;color:#323130;transform:scaleX(0.9000);">11</div>
<div class="t" style="left:541.60px;top:160.70px;font-size:28.75px;color:#323130;transform:scale(0.8800,1.0700);transform-origin:0 24.00px;">A</div>
<div class="t" style="left:584.00px;top:164.70px;font-size:24.25px;color:#323130;transform:scaleX(0.8353);">A</div>
<div class="t" style="left:246.90px;top:212.20px;font-size:21.25px;color:#323130;font-weight:bold;transform:scale(0.9125,1.0533);transform-origin:0 17.00px;">G</div>
<div class="t" style="left:286.12px;top:209.68px;font-size:22.97px;color:#323130;font-style:italic;transform:scaleX(0.8750);">C</div>
<div class="t" style="left:327.98px;top:211.20px;font-size:22.50px;color:#323130;transform:scale(0.7154,1.0533);transform-origin:0 18.00px;">S</div>
<div class="t" style="left:365.68px;top:211.20px;font-size:22.50px;color:#323130;transform:scale(0.9200,1.0533);transform-origin:0 18.00px;">D</div>
<div class="t" style="left:402.80px;top:213.24px;font-size:21.50px;color:#323130;transform:scaleX(0.7597);">ab</div>
<div class="t" style="left:556.40px;top:206.40px;font-size:26.25px;color:#323130;transform:scaleX(0.8444);">A</div>
<div class="t" style="left:785.00px;top:162.09px;font-size:17.00px;color:#3B3A39;transform:scaleX(1.0296);">ab</div>
<div class="t" style="left:785.00px;top:175.49px;font-size:17.00px;color:#3B3A39;transform:scale(1.0000,0.8037);transform-origin:0 13.91px;">c</div>
<div class="t" style="left:814.30px;top:167.02px;font-size:20.25px;color:#323130;transform:scaleX(0.9418);">Testo a capo</div>
<div class="t" style="left:813.77px;top:213.72px;font-size:20.50px;color:#323130;transform:scaleX(0.9321);">Unisci e centra</div>
<div class="t" style="left:999.64px;top:169.02px;font-size:19.75px;color:#323130;transform:scale(0.9556,0.9742);transform-origin:0 15.98px;">Generale</div>
<div class="t" style="left:1004.50px;top:208.00px;font-size:28.25px;color:#323130;transform:scale(0.7500,1.0263);transform-origin:0 24.00px;">$</div>
<div class="t" style="left:1053.06px;top:210.20px;font-size:28.75px;color:#323130;transform:scale(1.0375,1.1300);transform-origin:0 24.00px;">%</div>
<div class="t" style="left:1093.80px;top:214.91px;font-size:16.75px;color:#605E5C;transform:scaleX(0.8758);">000</div>
<div class="t" style="left:1145.00px;top:208.64px;font-size:14.50px;color:#323130;">,0</div>
<div class="t" style="left:1137.00px;top:220.14px;font-size:14.50px;color:#323130;transform:scaleX(0.9951);">,00</div>
<div class="t" style="left:1177.06px;top:208.64px;font-size:14.50px;color:#323130;transform:scaleX(0.9428);">,00</div>
<div class="t" style="left:1184.00px;top:220.14px;font-size:14.50px;color:#323130;">,0</div>
<div class="t" style="left:1239.59px;top:206.81px;font-size:19.50px;color:#323130;transform:scale(1.0131,0.9657);transform-origin:0 15.99px;">Formattazione</div>
<div class="t" style="left:1238.20px;top:232.21px;font-size:19.50px;color:#323130;transform:scale(1.0115,0.9657);transform-origin:0 15.99px;">condizionale</div>
<div class="t" style="left:1372.79px;top:206.81px;font-size:19.50px;color:#323130;transform:scale(1.0133,0.9657);transform-origin:0 15.99px;">Formatta come</div>
<div class="t" style="left:1400.80px;top:232.21px;font-size:19.50px;color:#323130;transform:scale(0.9928,0.9657);transform-origin:0 15.99px;">tabella</div>
<div class="t" style="left:1525.60px;top:206.81px;font-size:19.50px;color:#323130;transform:scale(0.9618,0.9657);transform-origin:0 15.99px;">Stili</div>
<div class="t" style="left:1604.10px;top:206.80px;font-size:21.00px;color:#323130;transform:scale(0.9038,1.0357);transform-origin:0 18.00px;">Inserisci</div>
<div class="t" style="left:1679.10px;top:206.80px;font-size:21.00px;color:#323130;transform:scale(0.8977,1.0357);transform-origin:0 18.00px;">Elimina</div>
<div class="t" style="left:1746.71px;top:206.12px;font-size:20.00px;color:#323130;transform:scaleX(0.9858);">Formato</div>
<div class="t" style="left:1853.80px;top:206.12px;font-size:20.00px;color:#323130;">Modifica</div>
<div class="t" style="left:13.16px;top:305.12px;font-size:20.50px;color:#201F1E;transform:scaleX(0.8436);">F9</div>
<div class="t" style="left:334.00px;top:299.52px;font-size:23.26px;color:#201F1E;font-style:italic;font-family:'Liberation Serif';transform:scaleX(1.0310);">fx</div>
<div class="t" style="left:376.28px;top:300.54px;font-size:21.75px;color:#323130;transform:scaleX(0.9153);">=DATI.ORDINA(FILTRO(</div>
<div class="t" style="left:599.60px;top:300.54px;font-size:21.75px;color:#4A80E6;transform:scaleX(0.9772);">A2:D13</div>
<div class="t" style="left:671.58px;top:300.54px;font-size:21.75px;color:#323130;transform:scaleX(1.1250);">;</div>
<div class="t" style="left:679.10px;top:300.54px;font-size:21.75px;color:#E84F59;transform:scaleX(0.9698);">A2:A13</div>
<div class="t" style="left:750.09px;top:300.54px;font-size:21.75px;color:#323130;transform:scaleX(0.9091);">=</div>
<div class="t" style="left:762.30px;top:300.54px;font-size:21.75px;color:#9A5CD2;transform:scaleX(0.9281);">A5</div>
<div class="t" style="left:787.76px;top:300.54px;font-size:21.75px;color:#323130;transform:scaleX(1.0409);">;&quot;non ci sono dati&quot;);4;-1)</div>
<div class="t" style="left:170.78px;top:350.80px;font-size:22.50px;color:#5F5E5C;transform:scale(0.8300,1.0467);transform-origin:0 18.00px;">A</div>
<div class="t" style="left:433.77px;top:350.80px;font-size:22.50px;color:#5F5E5C;transform:scale(0.8300,1.0467);transform-origin:0 18.00px;">B</div>
<div class="t" style="left:689.45px;top:350.80px;font-size:22.50px;color:#5F5E5C;transform:scale(0.8300,1.0467);transform-origin:0 18.00px;">C</div>
<div class="t" style="left:957.45px;top:350.80px;font-size:22.50px;color:#5F5E5C;transform:scale(0.8300,1.0467);transform-origin:0 18.00px;">D</div>
<div class="t" style="left:1167.36px;top:350.80px;font-size:22.50px;color:#5F5E5C;transform:scale(0.8300,1.0467);transform-origin:0 18.00px;">E</div>
<div class="t" style="left:1310.35px;top:351.80px;font-size:21.25px;color:#217346;font-weight:bold;transform:scale(0.8500,1.0467);transform-origin:0 17.00px;">F</div>
<div class="t" style="left:1501.94px;top:350.80px;font-size:22.50px;color:#5F5E5C;transform:scale(0.8300,1.0467);transform-origin:0 18.00px;">G</div>
<div class="t" style="left:1683.36px;top:350.80px;font-size:22.50px;color:#5F5E5C;transform:scale(0.8300,1.0467);transform-origin:0 18.00px;">H</div>
<div class="t" style="left:1855.60px;top:350.80px;font-size:22.50px;color:#5F5E5C;transform:scale(0.8300,1.0467);transform-origin:0 18.00px;">I</div>
<div class="t" style="left:1998.60px;top:350.80px;font-size:22.50px;color:#5F5E5C;transform:scale(0.8300,1.0467);transform-origin:0 18.00px;">J</div>
<div class="t" style="left:2101.86px;top:350.80px;font-size:22.50px;color:#5F5E5C;transform:scale(0.8300,1.0467);transform-origin:0 18.00px;">K</div>
<div class="t" style="left:21.82px;top:384.34px;font-size:21.75px;color:#5F5E5C;transform:scaleX(0.9200);">1</div>
<div class="t" style="left:22.28px;top:417.34px;font-size:21.75px;color:#5F5E5C;transform:scaleX(0.9200);">2</div>
<div class="t" style="left:22.28px;top:450.34px;font-size:21.75px;color:#5F5E5C;transform:scaleX(0.9200);">3</div>
<div class="t" style="left:22.28px;top:483.34px;font-size:21.75px;color:#5F5E5C;transform:scaleX(0.9200);">4</div>
<div class="t" style="left:22.28px;top:516.34px;font-size:21.75px;color:#5F5E5C;transform:scaleX(0.9200);">5</div>
<div class="t" style="left:21.82px;top:549.34px;font-size:21.75px;color:#5F5E5C;transform:scaleX(0.9200);">6</div>
<div class="t" style="left:22.28px;top:582.34px;font-size:21.75px;color:#5F5E5C;transform:scaleX(0.9200);">7</div>
<div class="t" style="left:22.28px;top:615.34px;font-size:21.75px;color:#5F5E5C;transform:scaleX(0.9200);">8</div>
<div class="t" style="left:22.28px;top:648.30px;font-size:21.75px;color:#217346;font-weight:bold;transform:scaleX(0.9200);">9</div>
<div class="t" style="left:16.26px;top:681.34px;font-size:21.75px;color:#5F5E5C;transform:scaleX(0.9200);">10</div>
<div class="t" style="left:17.00px;top:714.34px;font-size:21.75px;color:#5F5E5C;transform:scaleX(0.9200);">11</div>
<div class="t" style="left:16.72px;top:747.34px;font-size:21.75px;color:#5F5E5C;transform:scaleX(0.9200);">12</div>
<div class="t" style="left:16.26px;top:780.34px;font-size:21.75px;color:#5F5E5C;transform:scaleX(0.9200);">13</div>
<div class="t" style="left:16.26px;top:813.34px;font-size:21.75px;color:#5F5E5C;transform:scaleX(0.9200);">14</div>
<div class="t" style="left:16.26px;top:846.34px;font-size:21.75px;color:#5F5E5C;transform:scaleX(0.9200);">15</div>
<div class="t" style="left:16.26px;top:879.34px;font-size:21.75px;color:#5F5E5C;transform:scaleX(0.9200);">16</div>
<div class="t" style="left:16.72px;top:912.34px;font-size:21.75px;color:#5F5E5C;transform:scaleX(0.9200);">17</div>
<div class="t" style="left:16.26px;top:945.34px;font-size:21.75px;color:#5F5E5C;transform:scaleX(0.9200);">18</div>
<div class="t" style="left:16.26px;top:978.34px;font-size:21.75px;color:#5F5E5C;transform:scaleX(0.9200);">19</div>
<div class="t" style="left:16.26px;top:1011.34px;font-size:21.75px;color:#5F5E5C;transform:scaleX(0.9200);">20</div>
<div class="t" style="left:16.26px;top:1044.34px;font-size:21.75px;color:#5F5E5C;transform:scaleX(0.9200);">21</div>
<div class="t" style="left:16.72px;top:1077.34px;font-size:21.75px;color:#5F5E5C;transform:scaleX(0.9200);">22</div>
<div class="t" style="left:16.26px;top:1110.34px;font-size:21.75px;color:#5F5E5C;transform:scaleX(0.9200);">23</div>
<div class="t" style="left:16.26px;top:1143.34px;font-size:21.75px;color:#5F5E5C;transform:scaleX(0.9200);">24</div>
<div class="t" style="left:115.80px;top:383.50px;font-size:24.50px;color:#fff;font-weight:bold;transform:scaleX(0.8758);">VENDITORE</div>
<div class="t" style="left:392.04px;top:383.50px;font-size:24.50px;color:#fff;font-weight:bold;transform:scaleX(0.8634);">REGIONE</div>
<div class="t" style="left:649.00px;top:383.50px;font-size:24.50px;color:#fff;font-weight:bold;transform:scaleX(0.8475);">SETTORE</div>
<div class="t" style="left:901.62px;top:383.50px;font-size:24.50px;color:#fff;font-weight:bold;transform:scaleX(0.8827);">FATTURATO</div>
<div class="t" style="left:63.70px;top:418.84px;font-size:21.50px;color:#000;">Verdi</div>
<div class="t" style="left:299.40px;top:418.84px;font-size:21.50px;color:#000;">Friuli</div>
<div class="t" style="left:589.70px;top:418.84px;font-size:21.50px;color:#000;">Cancelleria</div>
<div class="t" style="left:1003.68px;top:418.84px;font-size:21.50px;color:#000;">18.000,00 €</div>
<div class="t" style="left:62.70px;top:451.84px;font-size:21.50px;color:#000;">Bianchi</div>
<div class="t" style="left:299.40px;top:451.84px;font-size:21.50px;color:#000;">Lombardia</div>
<div class="t" style="left:589.70px;top:451.84px;font-size:21.50px;color:#000;">Cancelleria</div>
<div class="t" style="left:1003.68px;top:451.84px;font-size:21.50px;color:#000;">21.000,00 €</div>
<div class="t" style="left:62.70px;top:484.84px;font-size:21.50px;color:#000;">Neri</div>
<div class="t" style="left:300.40px;top:484.84px;font-size:21.50px;color:#000;">Veneto</div>
<div class="t" style="left:589.70px;top:484.84px;font-size:21.50px;color:#000;">Cancelleria</div>
<div class="t" style="left:1003.68px;top:484.84px;font-size:21.50px;color:#000;">26.000,00 €</div>
<div class="t" style="left:62.70px;top:517.84px;font-size:21.50px;color:#000;">Rossi</div>
<div class="t" style="left:299.40px;top:517.84px;font-size:21.50px;color:#000;">Lombardia</div>
<div class="t" style="left:589.70px;top:517.84px;font-size:21.50px;color:#000;">Cancelleria</div>
<div class="t" style="left:1003.68px;top:517.84px;font-size:21.50px;color:#000;">27.000,00 €</div>
<div class="t" style="left:63.70px;top:550.84px;font-size:21.50px;color:#000;">Verdi</div>
<div class="t" style="left:300.40px;top:550.84px;font-size:21.50px;color:#000;">Veneto</div>
<div class="t" style="left:589.70px;top:550.84px;font-size:21.50px;color:#000;">Cancelleria</div>
<div class="t" style="left:1003.68px;top:550.84px;font-size:21.50px;color:#000;">33.000,00 €</div>
<div class="t" style="left:62.70px;top:583.84px;font-size:21.50px;color:#000;">Bianchi</div>
<div class="t" style="left:299.40px;top:583.84px;font-size:21.50px;color:#000;">Lombardia</div>
<div class="t" style="left:589.70px;top:583.84px;font-size:21.50px;color:#000;">Informatica</div>
<div class="t" style="left:1003.68px;top:583.84px;font-size:21.50px;color:#000;">35.000,00 €</div>
<div class="t" style="left:63.70px;top:616.84px;font-size:21.50px;color:#000;">Verdi</div>
<div class="t" style="left:299.40px;top:616.84px;font-size:21.50px;color:#000;">Lombardia</div>
<div class="t" style="left:589.70px;top:616.84px;font-size:21.50px;color:#000;">Cancelleria</div>
<div class="t" style="left:1003.68px;top:616.84px;font-size:21.50px;color:#000;">40.000,00 €</div>
<div class="t" style="left:62.70px;top:649.84px;font-size:21.50px;color:#000;">Bianchi</div>
<div class="t" style="left:300.40px;top:649.84px;font-size:21.50px;color:#000;">Trentino</div>
<div class="t" style="left:589.70px;top:649.84px;font-size:21.50px;color:#000;">Informatica</div>
<div class="t" style="left:1003.68px;top:649.84px;font-size:21.50px;color:#000;">42.000,00 €</div>
<div class="t" style="left:62.70px;top:682.84px;font-size:21.50px;color:#000;">Rossi</div>
<div class="t" style="left:300.40px;top:682.84px;font-size:21.50px;color:#000;">Veneto</div>
<div class="t" style="left:589.70px;top:682.84px;font-size:21.50px;color:#000;">Cancelleria</div>
<div class="t" style="left:1003.68px;top:682.84px;font-size:21.50px;color:#000;">55.000,00 €</div>
<div class="t" style="left:62.70px;top:715.84px;font-size:21.50px;color:#000;">Rossi</div>
<div class="t" style="left:300.40px;top:715.84px;font-size:21.50px;color:#000;">Veneto</div>
<div class="t" style="left:589.70px;top:715.84px;font-size:21.50px;color:#000;">Cancelleria</div>
<div class="t" style="left:1003.68px;top:715.84px;font-size:21.50px;color:#000;">66.000,00 €</div>
<div class="t" style="left:63.70px;top:748.84px;font-size:21.50px;color:#000;">Verdi</div>
<div class="t" style="left:299.40px;top:748.84px;font-size:21.50px;color:#000;">Friuli</div>
<div class="t" style="left:589.70px;top:748.84px;font-size:21.50px;color:#000;">Cancelleria</div>
<div class="t" style="left:1003.68px;top:748.84px;font-size:21.50px;color:#000;">70.000,00 €</div>
<div class="t" style="left:62.70px;top:781.84px;font-size:21.50px;color:#000;">Bianchi</div>
<div class="t" style="left:300.40px;top:781.84px;font-size:21.50px;color:#000;">Veneto</div>
<div class="t" style="left:589.70px;top:781.84px;font-size:21.50px;color:#000;">Cancelleria</div>
<div class="t" style="left:1003.68px;top:781.84px;font-size:21.50px;color:#000;">18.000,00 €</div>
<div class="t" style="left:1254.50px;top:383.50px;font-size:24.50px;color:#fff;font-weight:bold;transform:scaleX(0.8780);">VENDITORE</div>
<div class="t" style="left:1461.34px;top:383.50px;font-size:24.50px;color:#fff;font-weight:bold;transform:scaleX(0.8634);">REGIONE</div>
<div class="t" style="left:1642.20px;top:383.50px;font-size:24.50px;color:#fff;font-weight:bold;transform:scaleX(0.8519);">SETTORE</div>
<div class="t" style="left:1795.22px;top:383.50px;font-size:24.50px;color:#fff;font-weight:bold;transform:scaleX(0.8841);">FATTURATO</div>
<div class="t" style="left:1231.50px;top:418.84px;font-size:21.50px;color:#000;">Rossi</div>
<div class="t" style="left:1409.80px;top:418.84px;font-size:21.50px;color:#000;">Lombardia</div>
<div class="t" style="left:1617.00px;top:418.84px;font-size:21.50px;color:#000;">Cancelleria</div>
<div class="t" style="left:1885.67px;top:418.84px;font-size:21.50px;color:#000;">27000</div>
<div class="t" style="left:1231.50px;top:451.84px;font-size:21.50px;color:#000;">Rossi</div>
<div class="t" style="left:1410.80px;top:451.84px;font-size:21.50px;color:#000;">Veneto</div>
<div class="t" style="left:1617.00px;top:451.84px;font-size:21.50px;color:#000;">Cancelleria</div>
<div class="t" style="left:1885.67px;top:451.84px;font-size:21.50px;color:#000;">55000</div>
<div class="t" style="left:1231.50px;top:484.84px;font-size:21.50px;color:#000;">Rossi</div>
<div class="t" style="left:1410.80px;top:484.84px;font-size:21.50px;color:#000;">Veneto</div>
<div class="t" style="left:1617.00px;top:484.84px;font-size:21.50px;color:#000;">Cancelleria</div>
<div class="t" style="left:1885.67px;top:484.84px;font-size:21.50px;color:#000;">66000</div>
<div class="t" style="left:1231.50px;top:550.84px;font-size:21.50px;color:#000;">Rossi</div>
<div class="t" style="left:1410.80px;top:550.84px;font-size:21.50px;color:#000;">Veneto</div>
<div class="t" style="left:1617.00px;top:550.84px;font-size:21.50px;color:#000;">Cancelleria</div>
<div class="t" style="left:1885.67px;top:550.84px;font-size:21.50px;color:#000;">55000</div>
<div class="t" style="left:1231.50px;top:583.84px;font-size:21.50px;color:#000;">Rossi</div>
<div class="t" style="left:1410.80px;top:583.84px;font-size:21.50px;color:#000;">Veneto</div>
<div class="t" style="left:1617.00px;top:583.84px;font-size:21.50px;color:#000;">Cancelleria</div>
<div class="t" style="left:1885.67px;top:583.84px;font-size:21.50px;color:#000;">66000</div>
<div class="t" style="left:1231.50px;top:649.84px;font-size:21.50px;color:#000;">Rossi</div>
<div class="t" style="left:1410.80px;top:649.84px;font-size:21.50px;color:#000;">Veneto</div>
<div class="t" style="left:1617.00px;top:649.84px;font-size:21.50px;color:#000;">Cancelleria</div>
<div class="t" style="left:1885.67px;top:649.84px;font-size:21.50px;color:#000;">66000</div>
<div class="t" style="left:1231.50px;top:682.84px;font-size:21.50px;color:#000;">Rossi</div>
<div class="t" style="left:1410.80px;top:682.84px;font-size:21.50px;color:#000;">Veneto</div>
<div class="t" style="left:1617.00px;top:682.84px;font-size:21.50px;color:#000;">Cancelleria</div>
<div class="t" style="left:1885.67px;top:682.84px;font-size:21.50px;color:#000;">55000</div>
<div class="t" style="left:1231.50px;top:715.84px;font-size:21.50px;color:#000;">Rossi</div>
<div class="t" style="left:1409.80px;top:715.84px;font-size:21.50px;color:#000;">Lombardia</div>
<div class="t" style="left:1617.00px;top:715.84px;font-size:21.50px;color:#000;">Cancelleria</div>
<div class="t" style="left:1885.67px;top:715.84px;font-size:21.50px;color:#000;">27000</div>
<div class="r" style="left:1226px;top:641px;width:723.5px;height:99px;background:transparent;border:1px solid #3C6ED6;box-sizing:border-box;"></div>
<div class="r" style="left:1224px;top:639.4px;width:182.6px;height:36.2px;background:transparent;border:3px solid #217346;box-sizing:border-box;"></div>
<div class="r" style="left:1403px;top:671.8px;width:7.5px;height:7.5px;background:#217346;border:1px solid #fff;box-sizing:border-box;"></div>
<div class="r" style="left:1215.6px;top:628.6px;width:742.9px;height:125.6px;background:transparent;border:5px solid #FF0000;box-sizing:border-box;"></div>
<div class="r" style="left:327.5px;top:284.2px;width:707.7px;height:54.2px;background:transparent;border:5.4px solid #FF0000;box-sizing:border-box;"></div>
<div class="r" style="left:0px;top:1147px;width:59px;height:25px;background:#F4F4F4;"></div>
<div class="r" style="left:60px;top:1148.4px;width:2074.3px;height:23.1px;background:#E6E6E6;"></div>
<div class="r" style="left:60.5px;top:1148.4px;width:24.5px;height:23.1px;background:#fff;border:1px solid #BDBFC2;box-sizing:border-box;"></div>
<div class="r" style="left:84.5px;top:1148.4px;width:1023px;height:23.1px;background:#fff;border:1px solid #BDBFC2;box-sizing:border-box;"></div>
<div class="r" style="left:2110.5px;top:1148.4px;width:24px;height:23.1px;background:#fff;border:1px solid #BDBFC2;box-sizing:border-box;"></div>
<div class="r" style="left:2135.4px;top:377.5px;width:23.6px;height:769.7px;background:#E6E6E6;"></div>
<div class="r" style="left:2135.4px;top:378.9px;width:23.2px;height:23.6px;background:#fff;border:1px solid #BDBFC2;box-sizing:border-box;"></div>
<div class="r" style="left:2135.4px;top:402px;width:23.2px;height:300.5px;background:#fff;border:1px solid #BDBFC2;box-sizing:border-box;"></div>
<div class="r" style="left:2135.4px;top:1123.3px;width:23.2px;height:24px;background:#fff;border:1px solid #BDBFC2;box-sizing:border-box;"></div>
<div class="r" style="left:2134px;top:1147px;width:25px;height:25px;background:#F4F4F4;"></div>
<div class="r" style="left:0px;top:1171.5px;width:2159px;height:54px;background:#F4F4F4;"></div>
<div class="r" style="left:0px;top:1225.2px;width:2159px;height:1px;background:#DCDCDC;"></div>
<div class="r" style="left:0px;top:1226.2px;width:2159px;height:35px;background:#fff;"></div>
<div class="r" style="left:0px;top:1261px;width:2159px;height:2px;background:#141414;"></div>
<div class="r" style="left:120.8px;top:1189.4px;width:20.3px;height:2px;background:#3B3A39;"></div>
<div class="r" style="left:120.8px;top:1196px;width:20.3px;height:2px;background:#3B3A39;"></div>
<div class="r" style="left:120.8px;top:1203px;width:20.3px;height:2px;background:#3B3A39;"></div>
<div class="r" style="left:172px;top:1220.8px;width:81px;height:4px;background:#217346;"></div>
<div class="r" style="left:2023.5px;top:1243.3px;width:18.3px;height:1.5px;background:#3B3A39;"></div>
<svg width="2159" height="1263" viewBox="0 0 2159 1263">
<path d="M2010 640.2 V734" stroke="#FF0000" stroke-width="9.7" fill="none"/>
<polyline points="1983.5,701 2010,735.5 2036.5,700" stroke="#FF0000" stroke-width="9.7" fill="none" stroke-linejoin="miter" stroke-miterlimit="1.6"/>
<polygon points="68.2,1160 75.6,1154 75.6,1166" fill="#6E6E6E"/>
<polygon points="2126.5,1160 2119,1154 2119,1166" fill="#6E6E6E"/>
<polygon points="2147,385.5 2153.5,391.5 2140.5,391.5" fill="#6E6E6E"/>
<polygon points="2147,1138.5 2153.5,1132.5 2140.5,1132.5" fill="#6E6E6E"/>
<polyline points="28.5,1189.7 20.5,1197.5 28.5,1205.2" fill="none" stroke="#A6A6A6" stroke-width="1.5"/>
<polyline points="74.5,1189.7 82.5,1197.5 74.5,1205.2" fill="none" stroke="#A6A6A6" stroke-width="1.5"/>
<path d="M293.1 1187.7 V1206.7 M283.8 1197.2 H302.4" stroke="#3B3A39" stroke-width="1.6"/>
<polyline points="1649.5,1244.5 1654.0,1249.5 1658.5,1244.5" fill="none" stroke="#3B3A39" stroke-width="1.4"/>
<path d="M2122.5 1235.7 V1254 M2113.6 1244.5 H2131.3" stroke="#3B3A39" stroke-width="1.6"/>
</svg>
<div class="t" style="left:175.50px;top:1186.20px;font-size:23.00px;color:#3B3A39;font-weight:bold;transform:scale(0.8965,0.9588);transform-origin:0 19.00px;">Foglio1</div>
<div class="t" style="left:21.18px;top:1236.92px;font-size:19.75px;color:#3B3A39;transform:scale(1.0182,0.9742);transform-origin:0 15.98px;">Modalità di calcolo: Automatico</div>
<div class="t" style="left:327.50px;top:1236.92px;font-size:19.75px;color:#3B3A39;transform:scale(0.9912,0.9742);transform-origin:0 15.98px;">Statistiche cartella di lavoro</div>
<div class="t" style="left:1726.40px;top:1236.92px;font-size:19.75px;color:#3B3A39;transform:scale(0.9972,0.9742);transform-origin:0 15.98px;">Invia feedback a Microsoft</div>
<div class="t" style="left:2055.25px;top:1236.92px;font-size:19.75px;color:#3B3A39;transform:scale(0.9540,0.9742);transform-origin:0 15.98px;">100%</div>
</body></html>
